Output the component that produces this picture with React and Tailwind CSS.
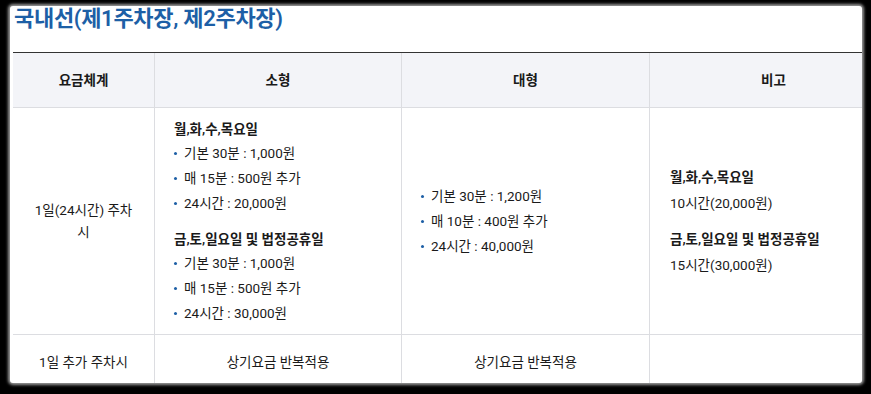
import React from "react";

const Dot = () => (
  <span className="inline-block w-[3px] h-[3px] rounded-full bg-[#1d5fa6] mr-[7px] shrink-0" />
);

const Li = ({ children }) => (
  <li className="flex items-center leading-[25px]">
    <Dot />
    <span>{children}</span>
  </li>
);

export default function App() {
  const font = { fontFamily: "Roboto, 'Noto Sans CJK KR', 'Noto Sans', sans-serif" };
  return (
    <div className="w-[871px] h-[394px] bg-black overflow-hidden pt-[6px] pl-[10px]" style={font}>
      <div className="w-[852px] h-[377px] bg-white overflow-hidden rounded-[3px] shadow-[0_0_3px_2px_rgba(255,255,255,0.6)]">
        <div className="h-[46px] pl-[4px]">
          <h2 className="text-[22px] leading-[25px] font-semibold text-[#1d5fa6] tracking-[-0.3px]">
            국내선(제1주차장, 제2주차장)
          </h2>
        </div>
        <div className="ml-[3px] w-[884px] border-t border-[#333] text-[13.5px] text-[#1a1a1a]">
          <div className="grid grid-cols-[141px_247px_248px_248px] bg-[#f3f4f8] h-[55px] border-b border-[#dcdde1] font-semibold">
            <div className="flex items-center justify-center">요금체계</div>
            <div className="flex items-center justify-center border-l border-[#dcdde1]">소형</div>
            <div className="flex items-center justify-center border-l border-[#dcdde1]">대형</div>
            <div className="flex items-center justify-center border-l border-[#dcdde1]">비고</div>
          </div>
          <div className="grid grid-cols-[141px_247px_248px_248px] h-[227px] border-b border-[#dcdde1]">
            <div className="flex items-center justify-center px-[20px] text-center leading-[22px]">
              1일(24시간) 주차 시
            </div>
            <div className="border-l border-[#dcdde1] pt-[10px] pl-[19px]">
              <div className="font-semibold leading-[22px]">월,화,수,목요일</div>
              <ul className="mt-[1px]">
                <Li>기본 30분 : 1,000원</Li>
                <Li>매 15분 : 500원 추가</Li>
                <Li>24시간 : 20,000원</Li>
              </ul>
              <div className="font-semibold leading-[22px] mt-[12px]">금,토,일요일 및 법정공휴일</div>
              <ul className="mt-[1px]">
                <Li>기본 30분 : 1,000원</Li>
                <Li>매 15분 : 500원 추가</Li>
                <Li>24시간 : 30,000원</Li>
              </ul>
            </div>
            <div className="border-l border-[#dcdde1] flex items-center pl-[19px]">
              <ul>
                <Li>기본 30분 : 1,200원</Li>
                <Li>매 10분 : 400원 추가</Li>
                <Li>24시간 : 40,000원</Li>
              </ul>
            </div>
            <div className="border-l border-[#dcdde1] flex flex-col justify-center pl-[20px] leading-[26px]">
              <div className="font-semibold">월,화,수,목요일</div>
              <div>10시간(20,000원)</div>
              <div className="font-semibold mt-[10px]">금,토,일요일 및 법정공휴일</div>
              <div>15시간(30,000원)</div>
            </div>
          </div>
          <div className="grid grid-cols-[141px_247px_248px_248px] h-[54px]">
            <div className="flex items-center justify-center">1일 추가 주차시</div>
            <div className="flex items-center justify-center border-l border-[#dcdde1]">상기요금 반복적용</div>
            <div className="flex items-center justify-center border-l border-[#dcdde1]">상기요금 반복적용</div>
            <div className="border-l border-[#dcdde1]"></div>
          </div>
        </div>
      </div>
    </div>
  );
}
